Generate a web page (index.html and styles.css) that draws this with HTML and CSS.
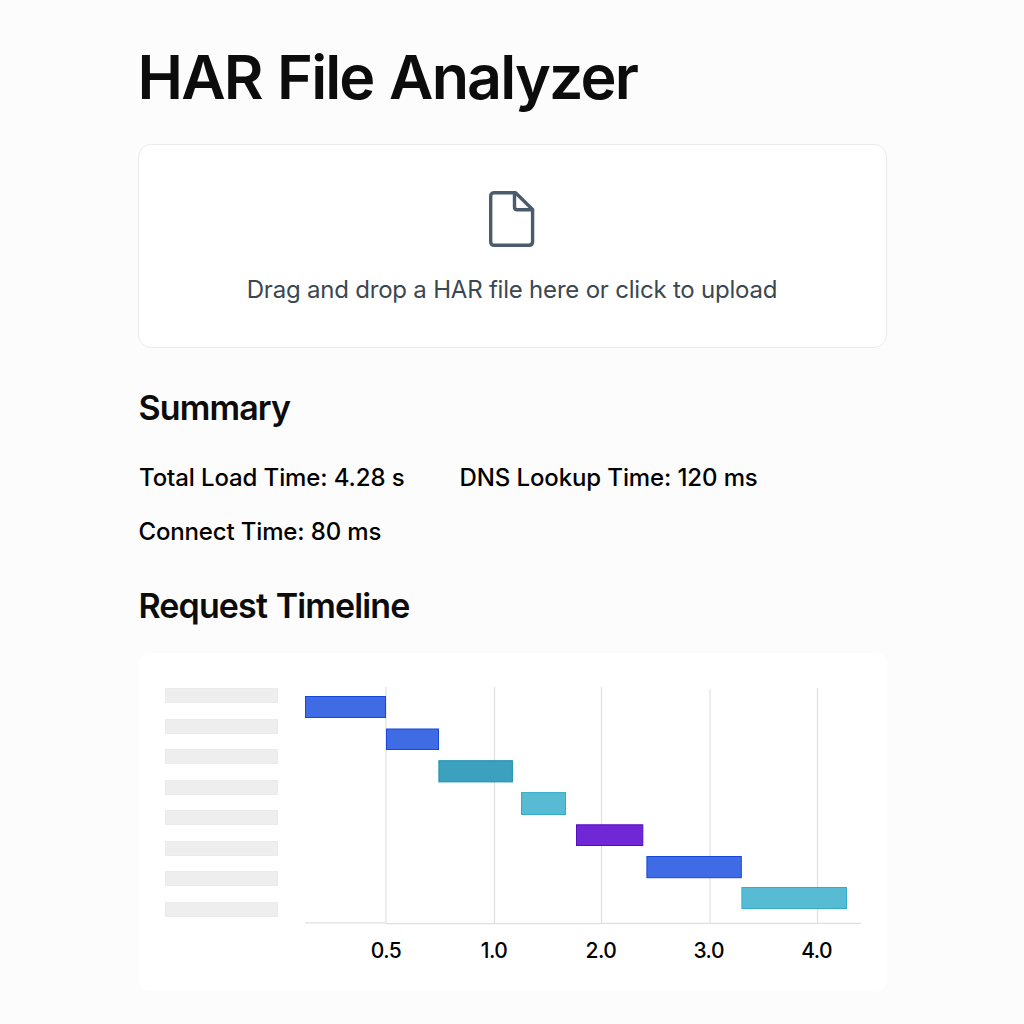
FILE: index.html
```html
<!DOCTYPE html>
<html lang="en">
<head>
<meta charset="utf-8">
<title>HAR File Analyzer</title>
<link rel="stylesheet" href="styles.css">
</head>
<body>
<main class="page">
  <h1 class="title"><span>HAR File Analyzer</span></h1>
  <section class="dropzone">
    <svg class="file-icon" width="48" height="58" viewBox="0 0 48 58" fill="none" stroke="#4a5c6c" stroke-width="3.4" stroke-linejoin="round">
      <path d="M6.5 2.700H27.500L44.600 19.500V51.500Q44.600 55.300 40.800 55.300H6.500Q2.700 55.300 2.700 51.500V6.500Q2.700 2.700 6.500 2.700Z"/>
      <path d="M26.500 3V17Q26.500 19.800 29.300 19.800H44.500"/>
    </svg>
    <p class="drop-text"><span>Drag and drop a HAR file here or click to upload</span></p>
  </section>
  <section class="summary">
    <h2 class="heading heading-summary"><span>Summary</span></h2>
    <div class="stats">
      <p class="stat stat-load"><span>Total Load Time: 4.28 s</span></p>
      <p class="stat stat-dns"><span>DNS Lookup Time: 120 ms</span></p>
      <p class="stat stat-connect"><span>Connect Time: 80 ms</span></p>
    </div>
  </section>
  <section class="timeline">
    <h2 class="heading heading-timeline"><span>Request Timeline</span></h2>
    <div class="chart-card">
      <div class="labels">
        <div class="label"></div><div class="label"></div><div class="label"></div><div class="label"></div>
        <div class="label"></div><div class="label"></div><div class="label"></div><div class="label"></div>
      </div>
      <svg class="plot" width="560" height="284" viewBox="304 686 560 284">
        <g class="grid">
          <path d="M386 687V923M494.500 687V923M601.500 687V923M710 689V923M817.500 688V923"/>
          <path d="M305 922.800H386M386 923.600H601M601 923.300H861"/>
        </g>
        <g class="bars">
          <rect class="blue" x="305.500" y="696.500" width="80" height="21"/>
          <rect class="blue" x="386.500" y="729" width="52" height="20.500"/>
          <rect class="teal" x="438.900" y="760.700" width="73.500" height="21.200"/>
          <rect class="cyan" x="521.500" y="792.600" width="44" height="21.900"/>
          <rect class="purple" x="576.500" y="824.800" width="66.300" height="20.700"/>
          <rect class="blue" x="646.900" y="856.500" width="94.400" height="21.200"/>
          <rect class="cyan" x="741.900" y="887.500" width="104.600" height="21"/>
        </g>
        <g class="ticks">
          <text x="386" y="957.500">0.5</text>
          <text x="494" y="957.500">1.0</text>
          <text x="601" y="957.500">2.0</text>
          <text x="708.700" y="957.500">3.0</text>
          <text x="816.700" y="957.500">4.0</text>
        </g>
      </svg>
    </div>
  </section>
</main>
</body>
</html>
```
FILE: styles.css
```css
* { box-sizing: border-box; }
body {
  margin: 0;
  background: #fcfcfc;
  color: #0c0c0c;
  font-family: Inter, "Liberation Sans", sans-serif;
}
h1, h2, p { margin: 0; }
.page { width: 749px; height: 1024px; margin: 0 auto; padding-top: 40px; }
.title { font-size: 61px; line-height: 74px; font-weight: 600; letter-spacing: -1.850px; word-spacing: 2px; }
.dropzone {
  height: 204px;
  margin-top: 30px;
  border: 1.5px solid #ebebeb;
  border-radius: 13px;
  background: #fff;
  display: flex;
  flex-direction: column;
  align-items: center;
  padding-top: 45px;
}
.file-icon { display: block; }
.drop-text {
  margin-top: 27px;
  font-size: 24px;
  line-height: 30px;
  letter-spacing: -0.210px;
  color: #3b4751;
  white-space: nowrap;
}
.heading { padding-left: 1px; font-size: 34px; line-height: 42px; font-weight: 600; letter-spacing: -0.880px; word-spacing: 1px; }
.heading-summary { margin-top: 39px; }
.stats {
  margin-top: 34px;
  padding-left: 1px;
  display: grid;
  grid-template-columns: 321px 1fr;
  row-gap: 24px;
}
.stat { font-size: 24px; line-height: 30px; font-weight: 500; letter-spacing: -0.110px; color: #000; white-space: nowrap; }
.stat-load { padding-left: 0.500px; }
.stat-connect { letter-spacing: -0.150px; }
.heading-timeline { margin-top: 38px; }
.chart-card {
  height: 338px;
  margin: 26px 0 0 1px;
  border-radius: 10px;
  background: #fff;
  display: flex;
  gap: 26px;
  padding: 33px 0 0 26.500px;
}
.labels { width: 113px; display: flex; flex-direction: column; gap: 15.500px; padding-top: 2px; }
.label { height: 15px; background: #eee; border: 1px solid #ebebeb; flex: none; }
.plot { display: block; flex: none; }
.grid { fill: none; stroke: #dfdfdf; stroke-width: 1.200px; }
.blue { fill: #3f6ce4; stroke: #1747dc; }
.teal { fill: #3ca1bf; stroke: #1c8fb0; }
.cyan { fill: #56bbd3; stroke: #32acca; }
.purple { fill: #7027d5; stroke: #5709c4; }
.ticks { font-size: 21px; font-weight: 500; letter-spacing: -0.500px; text-anchor: middle; fill: #000; }
```
